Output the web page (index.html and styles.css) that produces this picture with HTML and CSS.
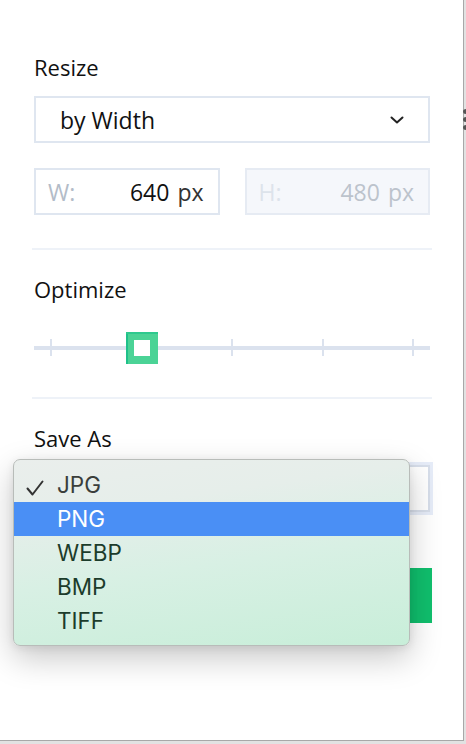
FILE: index.html
```html
<!DOCTYPE html>
<html>
<head>
<meta charset="utf-8">
<link rel="stylesheet" href="styles.css">
</head>
<body>
<div class="stage">
  <div class="panel">
    <section class="group">
      <h2 class="label">Resize</h2>
      <div class="select">
        <span class="select-text">by Width</span>
        <svg class="chev" width="14" height="8" viewBox="0 0 14 8"><path d="M1.5 1.5 L7 6.5 L12.5 1.5" fill="none" stroke="#222" stroke-width="2" stroke-linecap="round" stroke-linejoin="round"/></svg>
      </div>
      <div class="dims">
        <div class="dim">
          <span class="dim-key">W:</span>
          <span class="dim-val">640</span>
          <span class="dim-unit">px</span>
        </div>
        <div class="dim disabled">
          <span class="dim-key">H:</span>
          <span class="dim-val">480</span>
          <span class="dim-unit">px</span>
        </div>
      </div>
    </section>
    <hr class="sep">
    <section class="group">
      <h2 class="label">Optimize</h2>
      <div class="slider">
        <div class="track"></div>
        <div class="ticks">
          <i></i><i></i><i></i><i></i><i></i>
        </div>
        <div class="thumb"></div>
      </div>
    </section>
    <hr class="sep">
    <section class="group">
      <h2 class="label">Save As</h2>
      <div class="select focus"></div>
      <div class="btn"></div>
    </section>

    <div class="menu">
      <div class="item checked"><svg class="check" width="18" height="16" viewBox="0 0 18 16"><path d="M1.5 8.5 L6.5 14.5 L16.5 1.5" fill="none" stroke="#333" stroke-width="2" stroke-linecap="round" stroke-linejoin="round"/></svg>JPG</div>
      <div class="item active">PNG</div>
      <div class="item">WEBP</div>
      <div class="item">BMP</div>
      <div class="item">TIFF</div>
    </div>
  </div>
  <div class="edge-dots"><i></i><i></i><i></i></div>
</div>
</body>
</html>
```
FILE: styles.css
```css
html, body {
  margin: 0;
  padding: 0;
}
body {
  background: #e2e2e2;
  width: 466px;
  height: 744px;
  overflow: hidden;
  font-family: "Open Sans", "Noto Sans", sans-serif;
  color: #111;
}
.stage {
  position: relative;
  width: 466px;
  height: 744px;
}
.panel {
  position: relative;
  width: 464px;
  height: 741px;
  box-sizing: border-box;
  padding: 0 0 0 34px;
  background: #fff;
  border-right: 1px solid #a8a8a8;
  border-bottom: 1px solid #a8a8a8;
}
.group {
  width: 396px;
}
.label {
  margin: 0;
  font-size: 22px;
  font-weight: 400;
  line-height: 24px;
  color: #111;
}
.group:first-child {
  padding-top: 55px;
}
.group:first-child .label {
  margin-bottom: 17px;
}
.select {
  height: 47px;
  box-sizing: border-box;
  border: 2px solid #dfe6f0;
  display: flex;
  align-items: center;
  justify-content: space-between;
  padding: 0 24px 0 24px;
}
.select-text {
  font-size: 23px;
  color: #111;
}
.chev {
  display: block;
}
.dims {
  margin-top: 25px;
  display: flex;
  gap: 25px;
}
.dim {
  flex: 1;
  height: 47px;
  box-sizing: border-box;
  border: 2px solid #dfe6f0;
  display: flex;
  align-items: center;
  padding: 0 14px 0 12px;
  font-size: 23px;
}
.dim-key {
  color: #b3bcc8;
  flex: 1;
}
.dim-val {
  color: #111;
  margin-right: 8px;
}
.dim-unit {
  color: #333;
}
.dim.disabled {
  background: #f5f7fb;
  border-color: #e6ebf3;
}
.dim.disabled .dim-key {
  color: #dde3eb;
}
.dim.disabled .dim-val,
.dim.disabled .dim-unit {
  color: #bcc3cc;
}
.sep {
  width: 400px;
  margin: 33px 0 0 -2px;
  border: 0;
  border-top: 2px solid #eef2f8;
  height: 0;
}
.group:nth-of-type(2) {
  padding-top: 27px;
}
.slider {
  position: relative;
  height: 32px;
  margin-top: 31px;
}
.track {
  position: absolute;
  left: 0;
  right: 0;
  top: 14px;
  height: 4px;
  background: #dbe2ee;
}
.ticks {
  position: absolute;
  left: 16px;
  right: 16px;
  top: 7px;
  height: 17px;
  display: flex;
  justify-content: space-between;
}
.ticks i {
  display: block;
  width: 2px;
  height: 17px;
  background: #dbe2ee;
}
.thumb {
  position: absolute;
  left: 92px;
  top: 0;
  width: 32px;
  height: 32px;
  box-sizing: border-box;
  background: #fff;
  border: 8px solid #4bd396;
}
.thumb::before {
  content: "";
  position: absolute;
  left: -8px;
  top: -8px;
  width: 2px;
  height: 32px;
  background: #1fc08a;
}
.thumb::after {
  content: "";
  position: absolute;
  left: -8px;
  top: -8px;
  width: 32px;
  height: 2px;
  background: #2ec98e;
}
.group:nth-of-type(3) {
  padding-top: 27px;
}
.group:nth-of-type(3) .label {
  margin-bottom: 15px;
}
.select.focus {
  border-color: #d7deea;
  box-shadow: 0 0 0 3px #e6ecf8;
}
.btn {
  margin-top: 56px;
  height: 55px;
  width: 398px;
  background: #10bf6d;
}
.menu {
  position: absolute;
  left: 13px;
  top: 459px;
  width: 397px;
  height: 187px;
  box-sizing: border-box;
  padding: 8px 0;
  border: 1px solid #b8bcb9;
  border-radius: 7px;
  background: linear-gradient(172deg, #eaeeec 0%, #e6eeea 25%, #d8f0e4 55%, #c8eed9 100%);
  box-shadow: 0 12px 32px rgba(0, 0, 0, 0.22), 0 2px 8px rgba(0, 0, 0, 0.08);
  font-family: "Inter", "Liberation Sans", sans-serif;
  font-size: 22.5px;
  color: #1c3c2b;
  overflow: hidden;
}
.item {
  height: 34px;
  line-height: 34px;
  padding-left: 43px;
  position: relative;
}
.item.checked {
  color: #3a3e3c;
}
.check {
  position: absolute;
  left: 12px;
  top: 12px;
}
.item.active {
  background: #4a8ff5;
  color: #fff;
}
.edge-dots {
  position: absolute;
  left: 463px;
  top: 109px;
  display: flex;
  flex-direction: column;
  gap: 3px;
}
.edge-dots i {
  display: block;
  width: 6px;
  height: 5px;
  border-radius: 50%;
  background: #555;
}
```
